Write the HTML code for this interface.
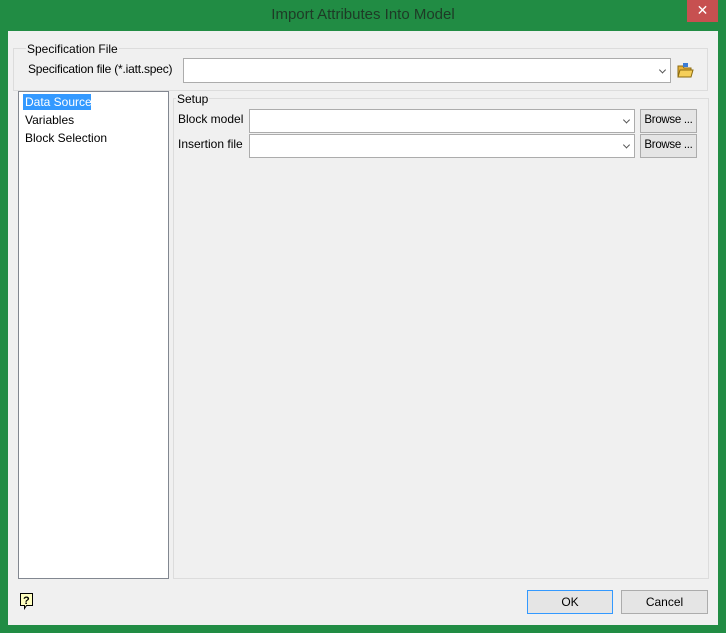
<!DOCTYPE html>
<html><head><style>
*{margin:0;padding:0;box-sizing:border-box}
body{width:726px;height:633px;background:#218c44;font-family:"Liberation Sans",sans-serif;font-size:12px;color:#000;position:relative;overflow:hidden}
.a{position:absolute;white-space:nowrap}
.client{left:8px;top:31px;width:710px;height:594px;background:#f0f0f0}
.title{left:0;top:6px;width:726px;text-align:center;font-size:15px;color:#1e3a26}
.close{left:687px;top:0;width:31px;height:22px;background:#c75050;color:#fff;text-align:center;font-size:14px;line-height:21px}
.grp{border:1px solid #dcdcdc}
.lbl{background:#f0f0f0;padding:0 1px}
.combo{background:#fff;border:1px solid #acacac}
.combo:after{content:"";position:absolute;right:5px;top:50%;width:4px;height:4px;border-right:1px solid #555;border-bottom:1px solid #555;transform:translateY(-70%) rotate(45deg)}
.btn{background:#e5e5e5;border:1px solid #acacac;text-align:center;line-height:21px}
</style></head><body>
<div class="a title">Import Attributes Into Model</div>
<div class="a close">✕</div>
<div class="a client"></div>
<div class="a grp" style="left:13px;top:48px;width:695px;height:43px"></div>
<div class="a lbl" style="left:26px;top:42px">Specification File</div>
<div class="a" style="left:28px;top:62px;letter-spacing:-0.2px">Specification file (*.iatt.spec)</div>
<div class="a combo" style="left:183px;top:58px;width:488px;height:25px"></div>
<svg class="a" style="left:677px;top:62px" width="17" height="16" viewBox="0 0 17 16"><path d="M1 4h5l1 2h7v9H1z" fill="#e8b23a" stroke="#8a6a10"/><path d="M3 8h13l-2 7H1z" fill="#f5cf5a" stroke="#8a6a10"/><rect x="6" y="1" width="5" height="4" fill="#3a7bd5"/></svg>
<div class="a" style="left:18px;top:91px;width:151px;height:488px;background:#fff;border:1px solid #828790"></div>
<div class="a" style="left:23px;top:94px;width:68px;height:16px;background:#3399ff"></div>
<div class="a" style="left:25px;top:95px;color:#fff">Data Source</div>
<div class="a" style="left:25px;top:113px">Variables</div>
<div class="a" style="left:25px;top:131px">Block Selection</div>
<div class="a grp" style="left:173px;top:98px;width:536px;height:481px"></div>
<div class="a lbl" style="left:176px;top:92px">Setup</div>
<div class="a" style="left:178px;top:112px">Block model</div>
<div class="a combo" style="left:249px;top:109px;width:386px;height:24px"></div>
<div class="a btn" style="left:640px;top:109px;width:57px;height:24px;font-size:11.5px;letter-spacing:-0.3px">Browse ...</div>
<div class="a" style="left:178px;top:137px">Insertion file</div>
<div class="a combo" style="left:249px;top:134px;width:386px;height:24px"></div>
<div class="a btn" style="left:640px;top:134px;width:57px;height:24px;font-size:11.5px;letter-spacing:-0.3px">Browse ...</div>
<svg class="a" style="left:19px;top:592px" width="17" height="18" viewBox="0 0 17 18"><path d="M1.5 1.5h12v12h-6l-2 3v-3h-4z" fill="#ffffc0" stroke="#000"/><text x="4" y="12" font-size="11" font-weight="bold" font-family="Liberation Sans" fill="#000">?</text></svg>
<div class="a btn" style="left:527px;top:590px;width:86px;height:24px;border-color:#3399ff;line-height:22px">OK</div>
<div class="a btn" style="left:621px;top:590px;width:87px;height:24px;line-height:22px">Cancel</div>
</body></html>
